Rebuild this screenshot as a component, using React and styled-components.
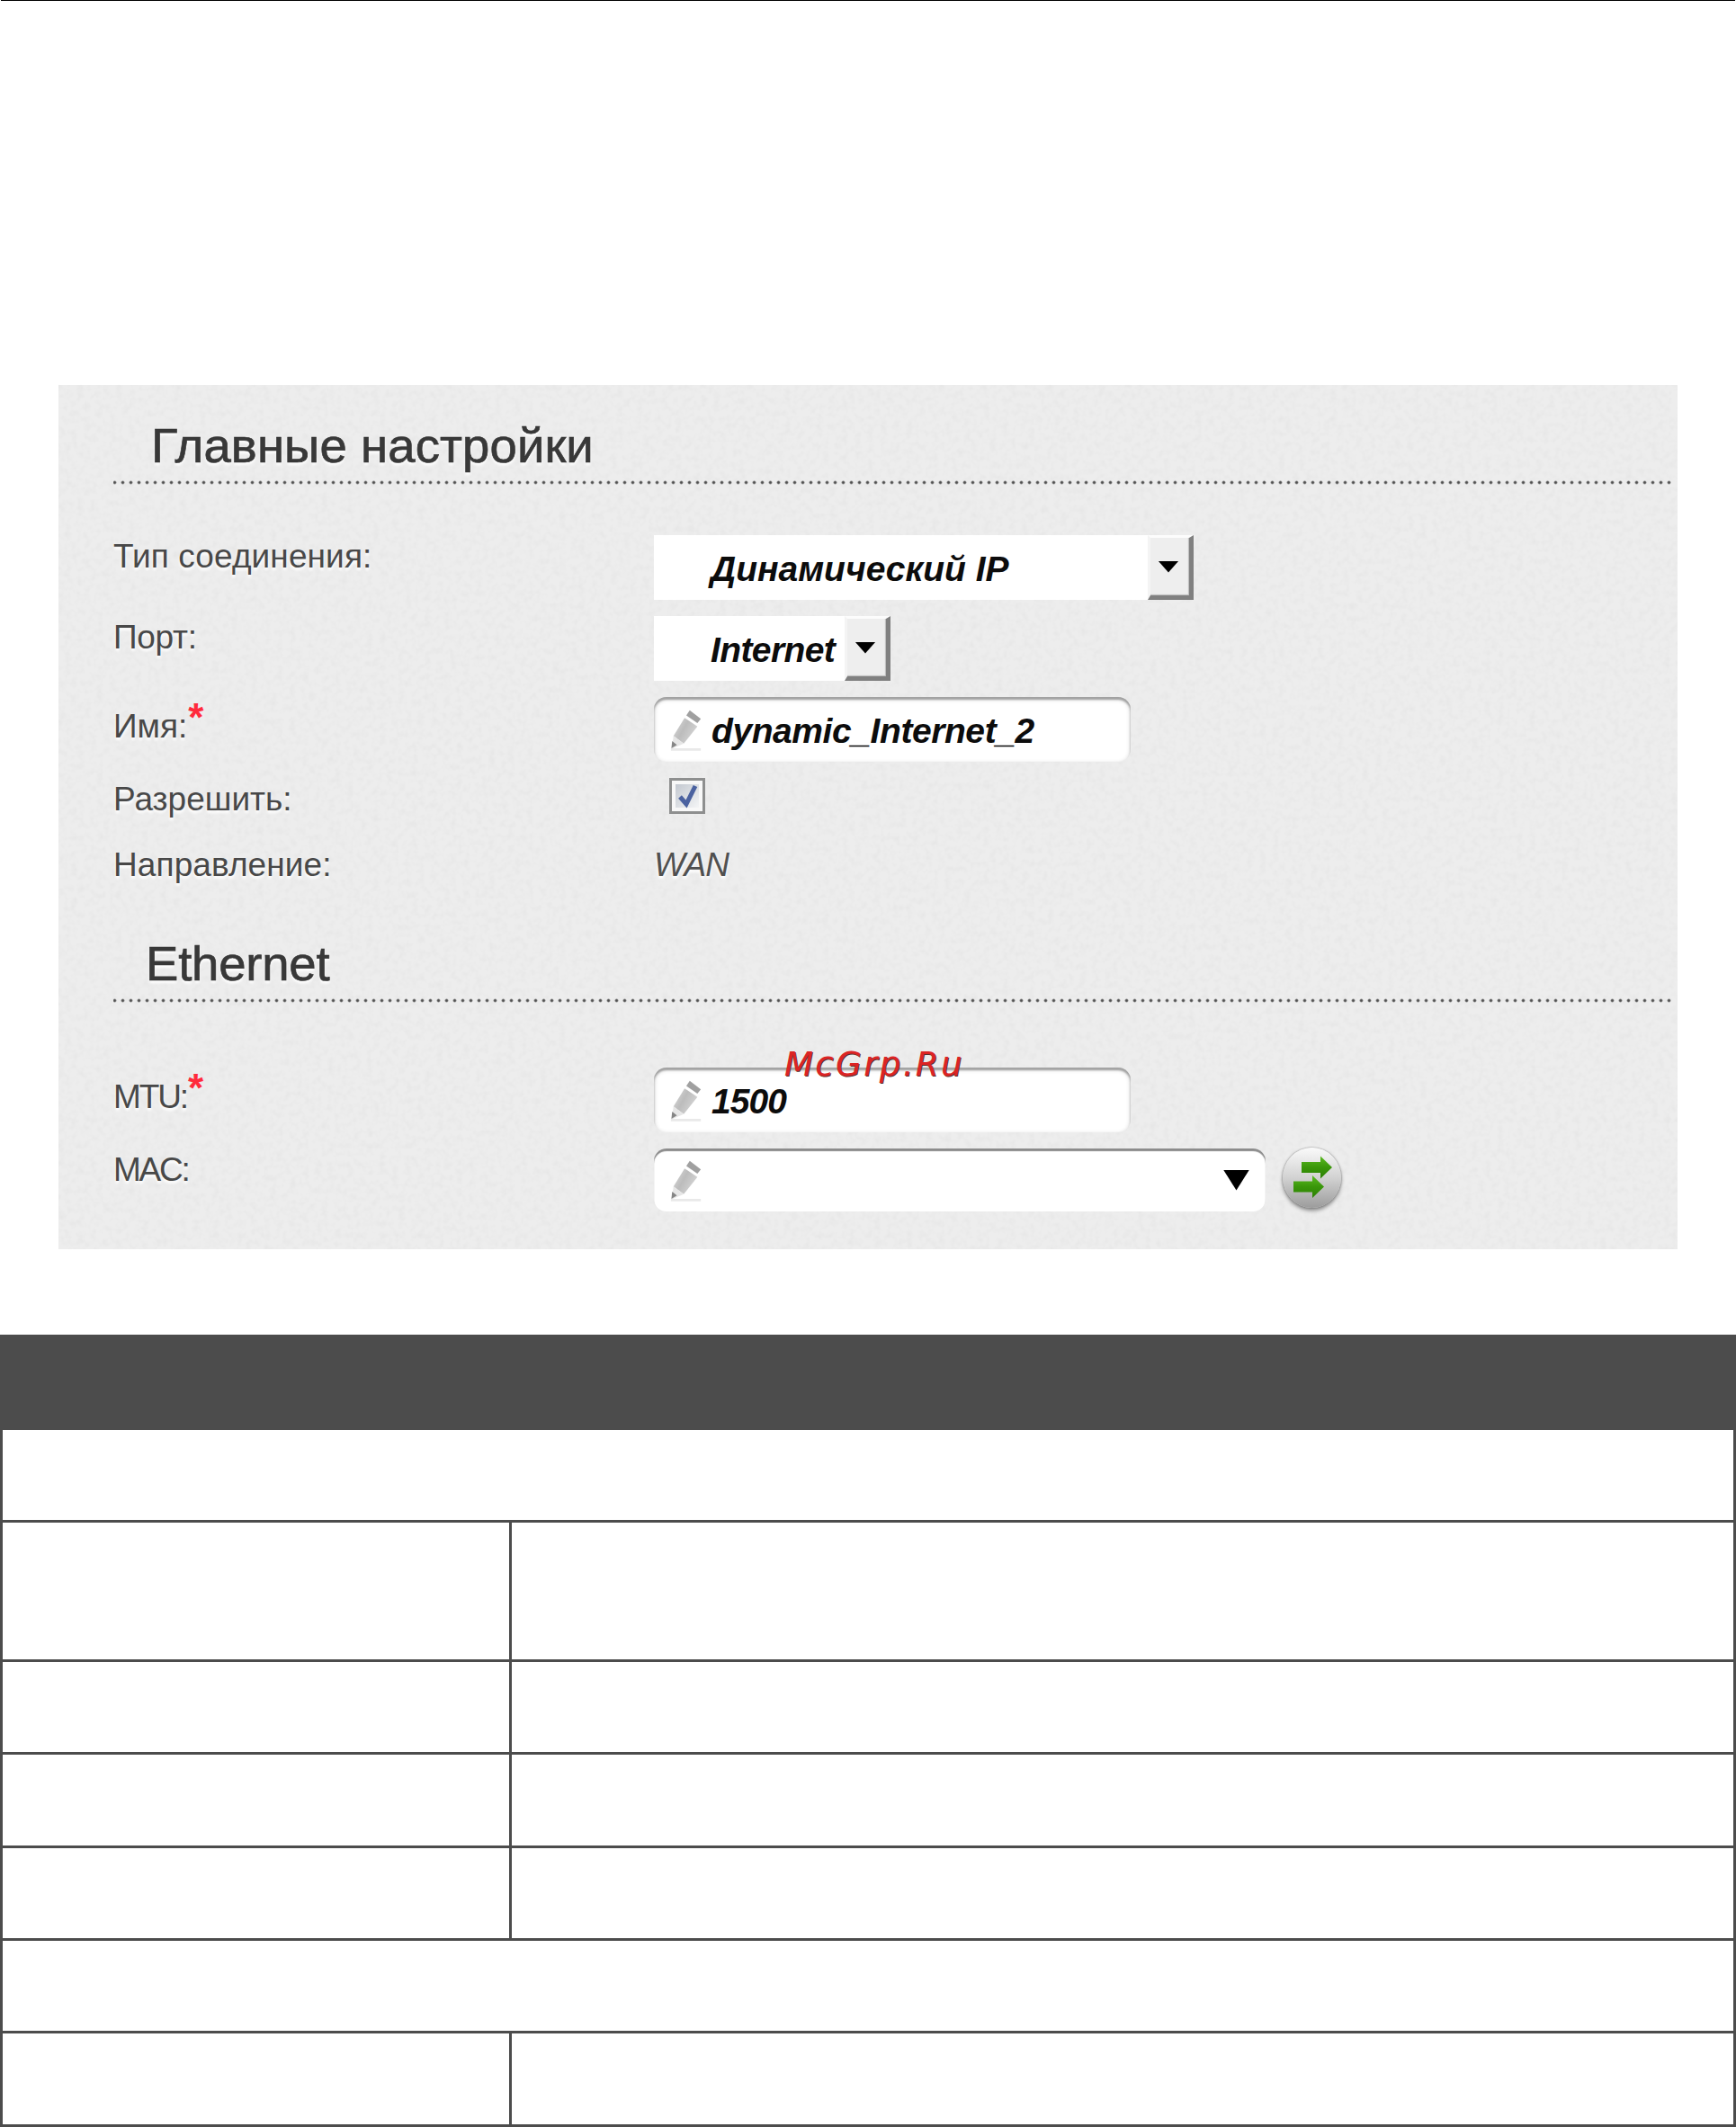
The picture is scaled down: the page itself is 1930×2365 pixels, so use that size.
import React from "react";
import styled, {createGlobalStyle} from "styled-components";

const connectionTypes = ["Динамический IP"];
const ports = ["Internet"];

const tableRows = [
    {height: 100, split: false},
    {height: 152, split: true},
    {height: 100, split: true},
    {height: 101, split: true},
    {height: 100, split: true},
    {height: 100, split: false},
    {height: 101, split: true},
];

const Pencil = () => (
    <PencilIcon viewBox="0 0 40 50">
        <defs>
            <linearGradient id="pencilBody" x1="0" y1="0" x2="1" y2="0.6">
                <stop offset="0" stopColor="#dedede"/>
                <stop offset="0.5" stopColor="#bcbcbc"/>
                <stop offset="1" stopColor="#d6d6d6"/>
            </linearGradient>
        </defs>
        <path d="M2 47 H37" stroke="#e9e9e9" strokeWidth="3"/>
        <path d="M18 10 L33 20 L17 40 L5 31 Z" fill="url(#pencilBody)"/>
        <path d="M5 31 L17 40 L3 46 Z" fill="#e6e6e6"/>
        <path d="M3.500 37 L9 41.500 L2.500 45.500 Z" fill="#858585"/>
        <path d="M24 1 L37 11 L33 16 L20 7 Z" fill="#a0a0a0"/>
    </PencilIcon>
);

const Swap = () => (
    <svg width="65" height="67" viewBox="0 0 65 67">
        <defs>
            <linearGradient id="swapArrow" x1="0" y1="0" x2="0" y2="1">
                <stop offset="0" stopColor="#5cbb22"/>
                <stop offset="0.5" stopColor="#3a960a"/>
                <stop offset="1" stopColor="#2c8003"/>
            </linearGradient>
        </defs>
        <path d="M21 16 H42 V9.500 L55 22 L42 34.500 V28 H21 Z" fill="url(#swapArrow)"/>
        <path d="M12 37.500 H33 V31 L46 43.500 L33 56 V49.500 H12 Z" fill="url(#swapArrow)"/>
    </svg>
);

const Grain = () => (
    <GrainLayer>
        <filter id="grain" x="0" y="0" width="100%" height="100%">
            <feTurbulence type="fractalNoise" baseFrequency="0.14" numOctaves="2" seed="4"/>
            <feColorMatrix values="0 0 0 0 0.45  0 0 0 0 0.45  0 0 0 0 0.45  0.22 0 0 0 -0.09"/>
        </filter>
        <rect width="100%" height="100%" filter="url(#grain)"/>
    </GrainLayer>
);

const Dropdown = ({width, options, spacing}) => (
    <Select $width={width}>
        <SelectText $spacing={spacing}>{options[0]}</SelectText>
        <SelectButton>
            <Triangle $width={23} $height={13}/>
        </SelectButton>
    </Select>
);

const App = () => (
    <Page>
        <GlobalStyle/>
        <TopRule/>
        <Panel>
            <Grain/>
            <Heading $indent={42} $spacing={0.1}>Главные настройки</Heading>
            <Fields $top={56}>
                <Row $height={90}>
                    <Label $top={3} $spacing={0.1}>Тип соединения:</Label>
                    <Dropdown width={600} options={connectionTypes}/>
                </Row>
                <Row $height={90}>
                    <Label $top={3} $spacing={-0.3}>Порт:</Label>
                    <Dropdown width={263} options={ports} spacing={-0.6}/>
                </Row>
                <Row $height={90}>
                    <Label $top={12}>Имя:<Required>*</Required></Label>
                    <Input $width={530}>
                        <Pencil/>
                        <InputText $spacing={-0.42}>dynamic_Internet_2</InputText>
                    </Input>
                </Row>
                <Row $height={75}>
                    <Label $top={3}>Разрешить:</Label>
                    <Checkbox>
                        <svg width="28" height="28" viewBox="0 0 28 28">
                            <path d="M6 15 L13 23 L23 3" fill="none" stroke="#4b62a0" strokeWidth="5"/>
                        </svg>
                    </Checkbox>
                </Row>
                <Row $height={64}>
                    <Label $top={1} $spacing={0.1}>Направление:</Label>
                    <PlainValue>WAN</PlainValue>
                </Row>
            </Fields>
            <Heading $indent={36} $spacing={-0.2}>Ethernet</Heading>
            <Fields $top={72}>
                <Row $height={90}>
                    <Label $top={12} $spacing={-2.1}>MTU:<Required>*</Required></Label>
                    <Input $width={530}>
                        <Pencil/>
                        <InputText $spacing={-0.9}>1500</InputText>
                    </Input>
                </Row>
                <Row $height={90}>
                    <Label $top={3} $spacing={-2.2}>MAC:</Label>
                    <MacField>
                        <Input $width={680} $dark>
                            <Pencil/>
                            <InputText/>
                            <Triangle $width={29} $height={23}/>
                        </Input>
                        <RoundButton>
                            <Swap/>
                        </RoundButton>
                    </MacField>
                </Row>
            </Fields>
            <Watermark>McGrp.Ru</Watermark>
        </Panel>
        <Table>
            <TableHead/>
            {tableRows.map((row, i) => (
                <TableRow key={i} $height={row.height}>
                    {row.split && <FirstCell/>}
                </TableRow>
            ))}
        </Table>
    </Page>
);

export default App;

const GlobalStyle = createGlobalStyle`
  body {
    margin: 0;
    background: #fff;
    font-family: "Liberation Sans", Arial, sans-serif;
  }

  * {
    box-sizing: border-box;
  }
`;

const Page = styled.div`
  width: 1930px;
  height: 2365px;
  overflow: hidden;
`;

const TopRule = styled.div`
  height: 1px;
  margin: 0 1px 427px;
  background: #000;
`;

const Panel = styled.section`
  position: relative;
  width: 1800px;
  height: 961px;
  margin-left: 65px;
  padding-left: 61px;
  background: #ededed;
`;

const GrainLayer = styled.svg`
  position: absolute;
  inset: 0;
  width: 100%;
  height: 100%;
`;

const Heading = styled.h2`
  position: relative;
  height: 111px;
  width: 1733px;
  margin: 0;
  padding: 38px 0 0 ${(props) => props.$indent}px;
  font-size: 54.5px;
  font-weight: 400;
  line-height: 60px;
  letter-spacing: ${(props) => props.$spacing}px;
  color: #383838;
  -webkit-text-stroke: 0.7px #383838;
  text-shadow: 0 3px 3px #fff;
  background: radial-gradient(circle, #505050 0.8px, #8a8a8a 1.5px, transparent 2.4px) -3px 100% / 9px 5px repeat-x;
`;

const Fields = styled.div`
  position: relative;
  padding-top: ${(props) => props.$top}px;
`;

const Row = styled.div`
  display: grid;
  grid-template-columns: 601px 1fr;
  align-items: start;
  height: ${(props) => props.$height}px;
`;

const Label = styled.div`
  padding-top: ${(props) => props.$top || 0}px;
  font-size: 37px;
  line-height: 42px;
  letter-spacing: ${(props) => props.$spacing || 0}px;
  color: #484848;
  text-shadow: 0 3px 3px #fff;
`;

const Required = styled.span`
  display: inline-block;
  height: 42px;
  margin-left: 1px;
  font-size: 44px;
  font-weight: 700;
  line-height: 22px;
  vertical-align: top;
  color: #ff2a3c;
  text-shadow: none;
`;

const Select = styled.div`
  display: flex;
  width: ${(props) => props.$width}px;
  height: 72px;
  background: #fff;
`;

const SelectText = styled.div`
  flex: 1;
  padding-left: 63px;
  font-size: 39px;
  font-weight: 700;
  font-style: italic;
  line-height: 75px;
  letter-spacing: ${(props) => props.$spacing || 0}px;
  white-space: nowrap;
  color: #0c0c0c;
`;

const SelectButton = styled.div`
  display: flex;
  align-items: center;
  justify-content: center;
  width: 51px;
  padding-right: 3px;
  border: solid;
  border-width: 3px 5px 5px 3px;
  border-color: #fcfcfc #808080 #808080 #f4f4f4;
  background: #eee;
  box-shadow: inset -1px -1px 1px #bbb;
`;

const Triangle = styled.div`
  width: ${(props) => props.$width}px;
  height: ${(props) => props.$height}px;
  background: #000;
  clip-path: polygon(0 0, 100% 0, 50% 100%);
`;

const Input = styled.div`
  display: flex;
  align-items: center;
  width: ${(props) => props.$width}px;
  height: ${(props) => (props.$dark ? 70 : 72)}px;
  padding: 0 18px 0 17px;
  border-radius: 14px;
  background: #fff;
  box-shadow: ${(props) => (props.$dark
    ? "inset 0 3px 1px #8c8c8c"
    : "inset 0 3px 2px #a2a2a2, inset 0 2px 5px #c4c4c4")};
`;

const PencilIcon = styled.svg`
  width: 38px;
  height: 49px;
  margin-top: 2px;
`;

const InputText = styled.div`
  flex: 1;
  padding: 3px 0 0 9px;
  font-size: 39px;
  font-weight: 700;
  font-style: italic;
  line-height: 72px;
  letter-spacing: ${(props) => props.$spacing || 0}px;
  color: #0c0c0c;
`;

const Checkbox = styled.div`
  display: flex;
  align-items: center;
  justify-content: center;
  width: 40px;
  height: 40px;
  margin-left: 17px;
  border: 3px solid #8e8f8f;
  background: linear-gradient(135deg, #c3c8d0, #f4f5f6) center / 26px 26px no-repeat #f8f8f8;
`;

const PlainValue = styled.div`
  padding-top: 1px;
  font-size: 37px;
  font-style: italic;
  line-height: 42px;
  letter-spacing: -0.8px;
  color: #505050;
  text-shadow: 0 3px 3px #fff;
`;

const MacField = styled.div`
  display: flex;
  gap: 19px;
`;

const RoundButton = styled.div`
  width: 65px;
  height: 67px;
  margin-top: -1px;
  border-radius: 50%;
  background: linear-gradient(#fafafa, #d2d2d2 50%, #9c9c9c);
  box-shadow: 0 0 2px #777, 0 3px 4px #888;
`;

const Watermark = styled.div`
  position: absolute;
  left: 807px;
  top: 734px;
  font-family: "DejaVu Sans", sans-serif;
  font-size: 37px;
  font-style: italic;
  line-height: 44px;
  letter-spacing: 2.4px;
  color: #dc2424;
  text-shadow: 1px 1px 0 #5a3030;
`;

const Table = styled.div`
  margin-top: 95px;
  border: solid #4c4c4c;
  border-width: 0 3px;
`;

const TableHead = styled.div`
  height: 106px;
  background: #4c4c4c;
`;

const TableRow = styled.div`
  display: flex;
  height: ${(props) => props.$height + 3}px;
  border-bottom: 3px solid #4c4c4c;
`;

const FirstCell = styled.div`
  width: 566px;
  border-right: 3px solid #4c4c4c;
`;
